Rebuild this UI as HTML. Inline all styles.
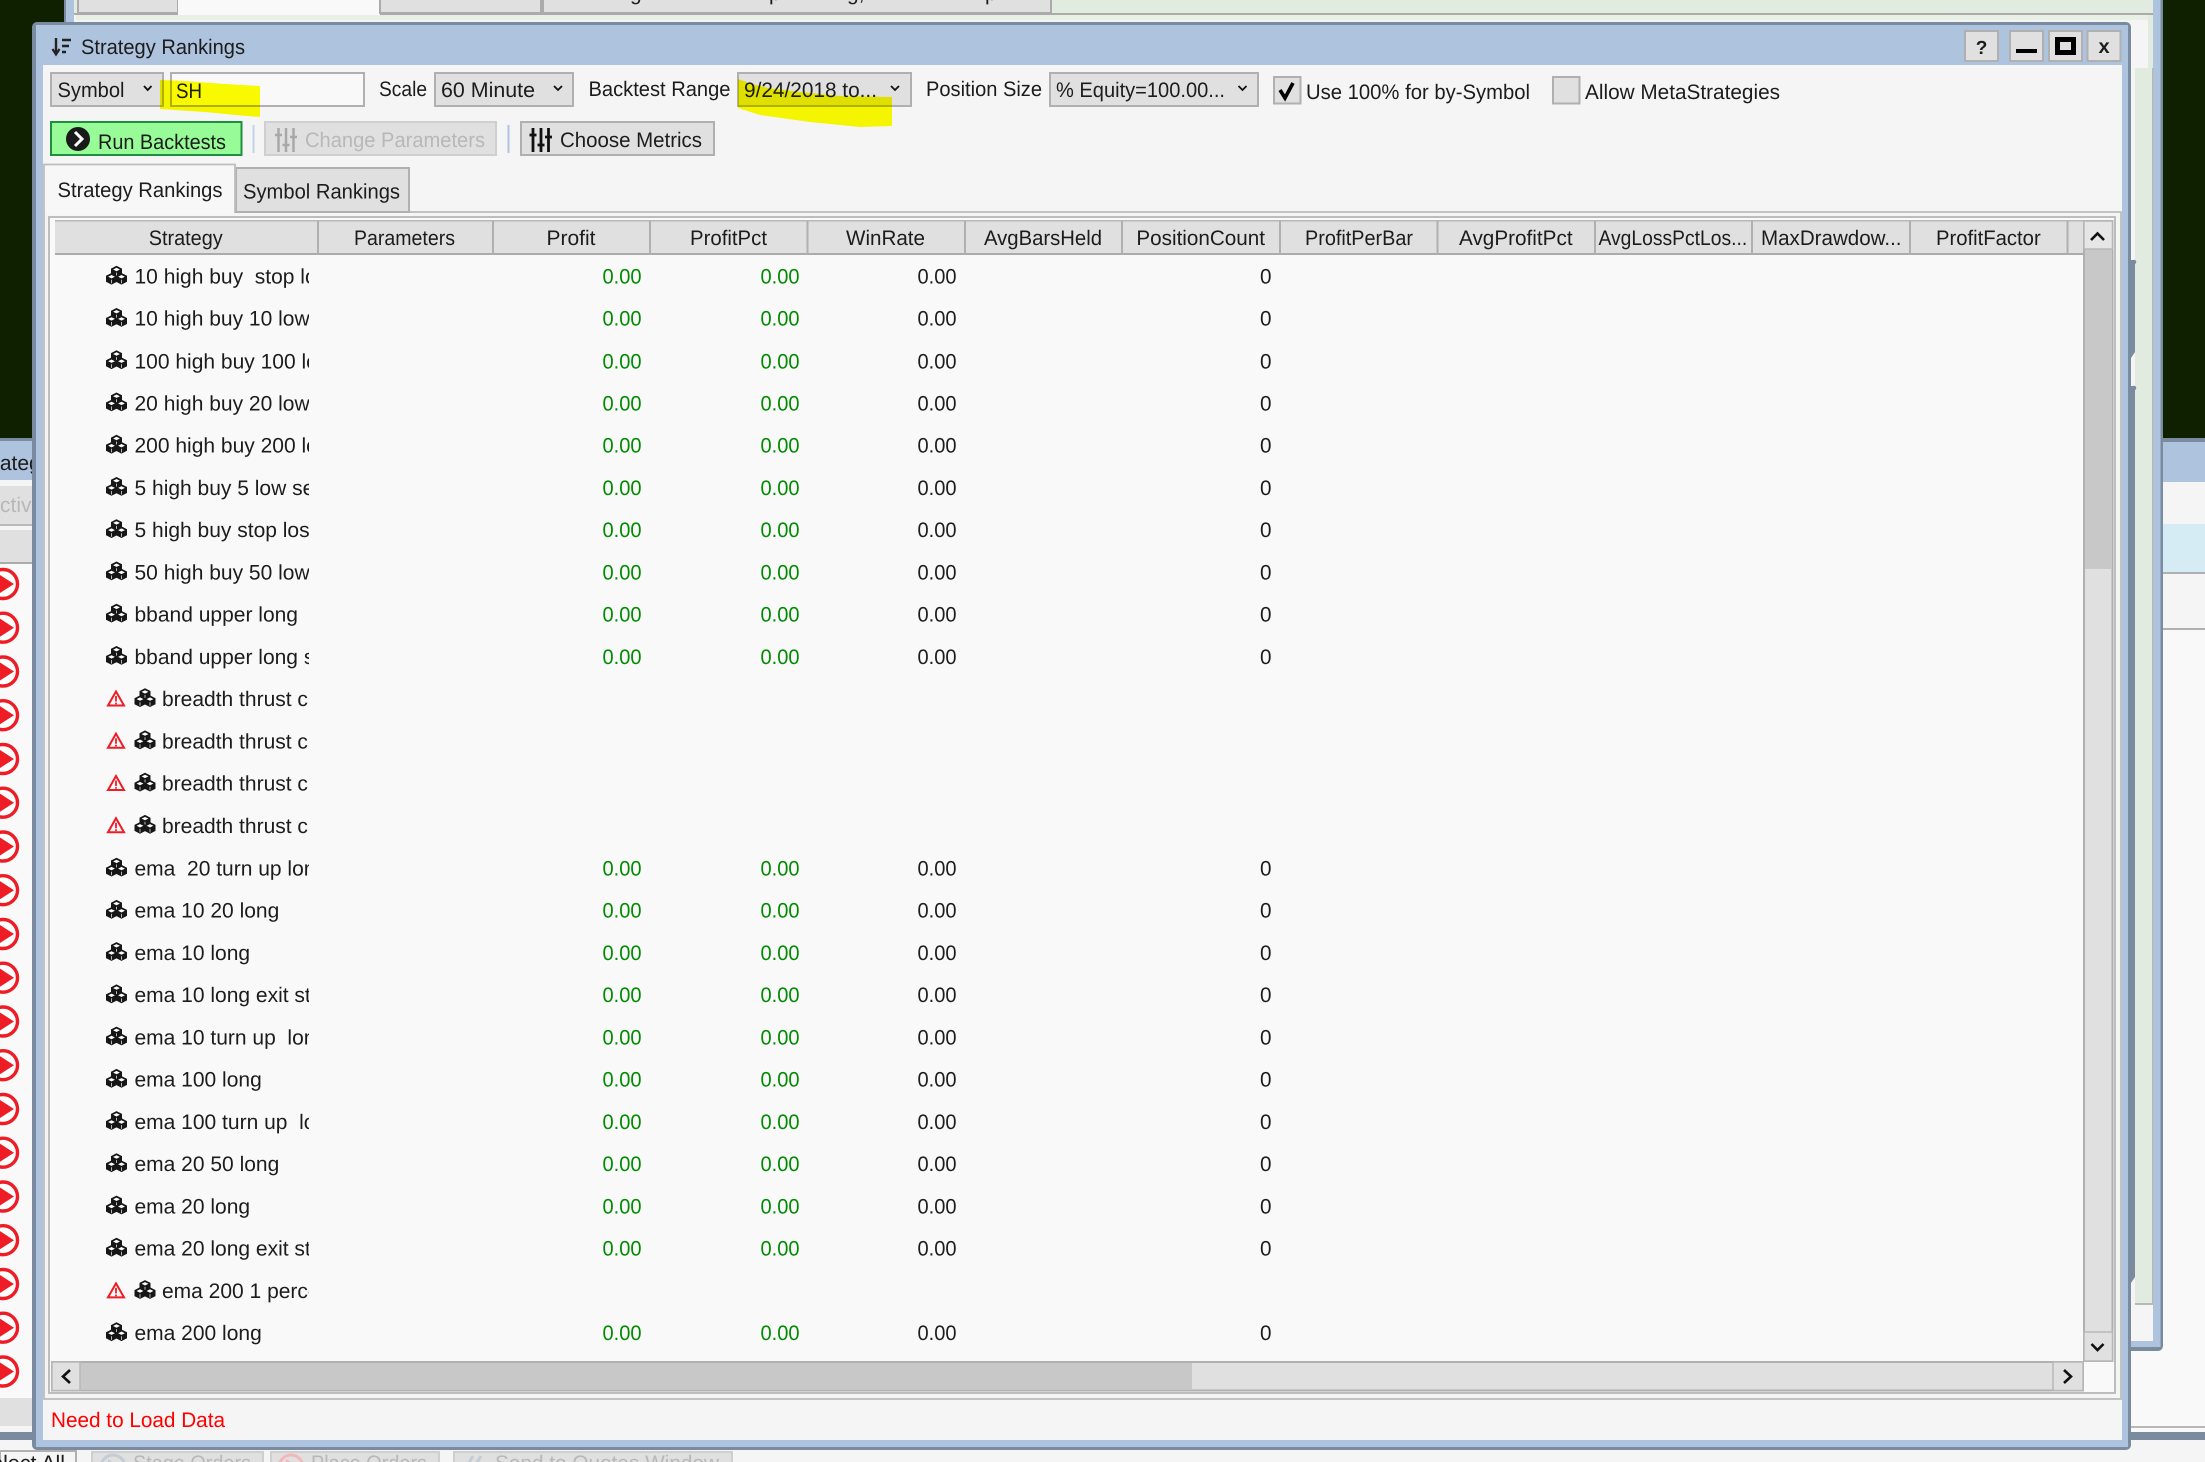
<!DOCTYPE html>
<html><head><meta charset="utf-8"><title>Strategy Rankings</title>
<style>
html,body{margin:0;padding:0;width:2205px;height:1462px;overflow:hidden;background:#f5f5f5}
svg{display:block}
text{font-family:"Liberation Sans",sans-serif;font-size:21px;fill:#1c1c1c;white-space:pre;text-rendering:geometricPrecision}
.g{fill:#008a00}
.d{fill:#b8b8b8}
.b{fill:#e0e0e0;stroke:#b0b0b0;stroke-width:2}
.h{stroke:#b0b0b0;stroke-width:2}
.s{fill:none;stroke:#111;stroke-width:2.6}
</style></head><body>
<svg width="2205" height="1462" viewBox="0 0 2205 1462" xmlns="http://www.w3.org/2000/svg">
<defs>
<g id="cube"><path d="M0 -5.800L5.500 -3V3L0 5.800L-5.500 3V-3Z" fill="#161616"/><path d="M0 -3.800L3.400 -2.100L0 -.4L-3.400 -2.100Z" fill="#fff"/><path d="M0 1V4.600" stroke="#fff" stroke-width=".7"/></g>
<g id="c"><use href="#cube" x="11.500" y="5.600"/><use href="#cube" x="6.500" y="12.800"/><use href="#cube" x="16.500" y="12.800"/></g>
<g id="w"><path d="M9 1.500L17 15.500H1Z" fill="none" stroke="#ee1c25" stroke-width="2"/><path d="M9 6V11.500M9 12.600V14.300" stroke="#ee1c25" stroke-width="1.800"/></g>
<g id="r"><circle cx="3" cy="0" r="14.500" fill="#fff" stroke="#ee1c25" stroke-width="3.400"/><path d="M-3 -11L14 0L-3 11Z" fill="#ee1c25"/></g>
<clipPath id="nc"><rect x="50" y="255" width="259" height="1106"/></clipPath>
<clipPath id="lc"><rect x="0" y="0" width="32" height="1462"/></clipPath>
</defs>

<rect width="2205" height="1462" fill="#f5f5f5"/>
<!-- dark desktop -->
<rect x="0" y="0" width="66" height="438" fill="#0f2000"/>
<rect x="2160" y="0" width="45" height="438" fill="#0f2000"/>

<!-- back right window -->
<rect x="2131" y="438" width="74" height="994" fill="#f9f9f9"/>
<rect x="2163" y="438" width="42" height="4" fill="#7a8b9f"/>
<rect x="2163" y="442" width="42" height="40" fill="#aec3de"/>
<rect x="2163" y="482" width="42" height="42" fill="#f5f5f5"/>
<rect x="2163" y="524" width="42" height="48" fill="#d6ecf4"/>
<rect x="2163" y="572" width="42" height="2" fill="#b0b0b0"/>
<rect x="2163" y="574" width="42" height="54" fill="#f5f5f5"/>
<rect x="2163" y="628" width="42" height="2" fill="#b0b0b0"/>
<rect x="2131" y="1426" width="74" height="2" fill="#b8b8b8"/>
<rect x="2131" y="1432" width="74" height="8" fill="#7a8b9f"/>

<!-- behind window -->
<path d="M64 0H2163V1346a5 5 0 0 1-5 5H64Z" fill="#7a8b9f"/>
<path d="M66 0H2160.500V1347H66Z" fill="#aec3de"/>
<rect x="74" y="0" width="2079" height="1341" fill="#f5f5f5"/>
<rect x="74" y="0" width="2079" height="14" fill="#e2ebe0"/>
<rect x="74" y="13" width="2079" height="2" fill="#ababab"/>
<rect x="76" y="15" width="2072" height="5" fill="#e8f0e6"/>
<rect x="2135" y="68" width="18" height="1235" fill="#e2ebe0"/>
<rect x="2148" y="15" width="5" height="54" fill="#e2ebe0"/>
<rect x="2135" y="1303" width="18" height="2" fill="#b8b8b8"/>
<rect x="2152" y="68" width="1.500" height="1235" fill="#b8b8b8"/>
<rect x="78" y="-2" width="100" height="15" fill="#e0e0e0" stroke="#ababab" stroke-width="2"/>
<rect x="178" y="0" width="202" height="15" fill="#f9f9f9"/>
<rect x="380" y="-2" width="161" height="15" fill="#e0e0e0" stroke="#ababab" stroke-width="2"/>
<rect x="543" y="-2" width="508" height="15" fill="#e0e0e0" stroke="#ababab" stroke-width="2"/>
<text x="630" y="0">g</text><text x="769" y="0">p</text><text x="847" y="0">g,</text><text x="985" y="0">p</text>
<path d="M2131 260h2a2 2 0 0 1 2 4V352l-4 6ZM2131 386h2a2 2 0 0 1 2 4V1277l-4 6Z" fill="#7a8b9f"/>

<!-- left back window -->
<rect x="0" y="438" width="35" height="4" fill="#7a8b9f"/>
<rect x="0" y="441" width="35" height="39" fill="#aec3de"/>
<rect x="0" y="480" width="35" height="960" fill="#f9f9f9"/>
<rect x="0" y="480" width="35" height="6" fill="#f5f5f5"/>
<rect x="0" y="486" width="35" height="38" fill="#e0e0e0"/>
<rect x="0" y="524" width="35" height="2" fill="#b8b8b8"/>
<rect x="0" y="526" width="35" height="4" fill="#f5f5f5"/>
<rect x="0" y="530" width="35" height="32" fill="#e0e0e0"/>
<rect x="0" y="562" width="35" height="2" fill="#ababab"/>
<rect x="0" y="1398" width="35" height="28" fill="#e0e0e0"/>
<rect x="0" y="1426" width="35" height="6" fill="#f5f5f5"/>
<rect x="0" y="1432" width="35" height="8" fill="#7a8b9f"/>
<rect x="0" y="1440" width="35" height="22" fill="#f5f5f5"/>
<g clip-path="url(#lc)">
<text x="-27" y="470">Strategy</text>
<text x="-14" y="512" class="d">Activate</text>
<use href="#r" y="584"/><use href="#r" y="627.700"/><use href="#r" y="671.500"/><use href="#r" y="715.200"/><use href="#r" y="759"/><use href="#r" y="802.700"/><use href="#r" y="846.500"/><use href="#r" y="890.200"/><use href="#r" y="934"/><use href="#r" y="977.700"/><use href="#r" y="1021.500"/><use href="#r" y="1065.200"/><use href="#r" y="1109"/><use href="#r" y="1152.700"/><use href="#r" y="1196.500"/><use href="#r" y="1240.200"/><use href="#r" y="1284"/><use href="#r" y="1327.700"/><use href="#r" y="1371.500"/>
</g>

<!-- bottom strip -->
<rect x="0" y="1451" width="76" height="12" fill="#f5f5f5" stroke="#b0b0b0" stroke-width="2"/>
<text x="-23" y="1470" textLength="88" lengthAdjust="spacingAndGlyphs">Select All</text>
<rect x="92" y="1452" width="171" height="12" fill="#e0e0e0" stroke="#cfcfcf" stroke-width="2"/>
<circle cx="113" cy="1467" r="12" fill="none" stroke="#c4ccd6" stroke-width="3"/><path d="M108 1459L120 1467L108 1475Z" fill="#c4ccd6"/>
<text x="133" y="1470" class="d" textLength="118" lengthAdjust="spacingAndGlyphs">Stage Orders</text>
<rect x="271" y="1452" width="168" height="12" fill="#e0e0e0" stroke="#cfcfcf" stroke-width="2"/>
<circle cx="291" cy="1467" r="12" fill="none" stroke="#f4b8ba" stroke-width="3"/><path d="M286 1459L298 1467L286 1475Z" fill="#f4b8ba"/>
<text x="311" y="1470" class="d" textLength="116" lengthAdjust="spacingAndGlyphs">Place Orders</text>
<rect x="454" y="1452" width="278" height="12" fill="#e0e0e0" stroke="#cfcfcf" stroke-width="2"/>
<path d="M473 1456L468 1464M481 1456L476 1464" stroke="#c4ccd6" stroke-width="3" fill="none"/>
<text x="495" y="1470" class="d" textLength="224" lengthAdjust="spacingAndGlyphs">Send to Quotes Window</text>

<!-- main window -->
<rect x="32" y="22" width="2099" height="1428" rx="5" fill="#7a8b9f"/>
<rect x="36" y="25" width="2092" height="1422" fill="#aec3de"/>
<rect x="43" y="65" width="2079" height="1375" fill="#f5f5f5"/>

<!-- title -->
<path d="M56 38V52" stroke="#222" stroke-width="2.400"/><path d="M52.500 49L56 54.500L59.500 49" fill="none" stroke="#222" stroke-width="2.200"/>
<path d="M62 40H71M62 46H69M62 52H66" stroke="#222" stroke-width="2.400"/>
<text x="81" y="54" textLength="164" lengthAdjust="spacingAndGlyphs">Strategy Rankings</text>
<rect x="1965" y="31" width="33" height="30" class="b"/>
<text x="1981.500" y="54" text-anchor="middle" style="font-weight:bold;font-size:19px">?</text>
<rect x="2010" y="31" width="33" height="30" class="b"/><rect x="2016" y="49" width="21" height="4" fill="#000"/>
<rect x="2049" y="31" width="33" height="30" class="b"/><rect x="2057.500" y="39.500" width="16" height="13" fill="none" stroke="#000" stroke-width="5"/>
<rect x="2087.500" y="31" width="33" height="30" class="b"/>
<text x="2104" y="53" text-anchor="middle" style="font-weight:bold;font-size:20px">x</text>

<!-- toolbar -->
<rect x="51" y="73" width="112" height="33" class="b"/>
<text x="57.500" y="97" textLength="67" lengthAdjust="spacingAndGlyphs">Symbol</text>
<path d="M144 86L147.700 90L151.500 86" class="s" style="stroke-width:1.800"/>
<rect x="171" y="73" width="193" height="33" fill="#f9f9f9" stroke="#b0b0b0" stroke-width="2"/>
<text x="176" y="98" textLength="26" lengthAdjust="spacingAndGlyphs">SH</text>
<text x="379" y="96" textLength="48" lengthAdjust="spacingAndGlyphs">Scale</text>
<rect x="435" y="73" width="138" height="33" class="b"/>
<text x="441" y="97" textLength="94" lengthAdjust="spacingAndGlyphs">60 Minute</text>
<path d="M554 86L558 90L562 86" class="s" style="stroke-width:1.800"/>
<text x="588.500" y="96" textLength="142" lengthAdjust="spacingAndGlyphs">Backtest Range</text>
<rect x="738" y="73" width="173" height="33" class="b"/>
<text x="744" y="97" textLength="133" lengthAdjust="spacingAndGlyphs">9/24/2018 to...</text>
<path d="M891 86L895 90L899 86" class="s" style="stroke-width:1.800"/>
<text x="926" y="96" textLength="116" lengthAdjust="spacingAndGlyphs">Position Size</text>
<rect x="1050" y="73" width="208" height="33" class="b"/>
<text x="1056" y="97" textLength="169" lengthAdjust="spacingAndGlyphs">% Equity=100.00...</text>
<path d="M1238.500 86L1242.500 90L1246.500 86" class="s" style="stroke-width:1.800"/>
<rect x="1274" y="77" width="26.500" height="26.500" class="b"/>
<path d="M1280 90L1285 98L1293 83" fill="none" stroke="#000" stroke-width="3.600"/>
<text x="1306" y="99" textLength="224" lengthAdjust="spacingAndGlyphs">Use 100% for by-Symbol</text>
<rect x="1553" y="77" width="26.500" height="26.500" class="b"/>
<text x="1585" y="99" textLength="195" lengthAdjust="spacingAndGlyphs">Allow MetaStrategies</text>

<!-- buttons -->
<rect x="51" y="122" width="190.500" height="33" fill="#97fb97" stroke="#1f8f3f" stroke-width="2"/>
<circle cx="78" cy="139" r="12" fill="#1a1a1a"/><path d="M75 132L82 139L75 146" fill="none" stroke="#fff" stroke-width="3"/>
<text x="98" y="149" textLength="128" lengthAdjust="spacingAndGlyphs">Run Backtests</text>
<rect x="252.500" y="125" width="2" height="28" fill="#c3d3e7"/>
<rect x="265" y="122" width="231" height="33" fill="#e0e0e0" stroke="#cfcfcf" stroke-width="2"/>
<path d="M278.500 128V152M286 128V152M293.500 128V152M275 135H282M282.500 145H289.500M290 137H297" stroke="#a8a8a8" stroke-width="2.500" fill="none"/>
<text x="305" y="147" class="d" textLength="180" lengthAdjust="spacingAndGlyphs">Change Parameters</text>
<rect x="507.500" y="125" width="2" height="28" fill="#aec3de"/>
<rect x="521" y="122" width="193" height="33" class="b"/>
<path d="M533 128V152M541 128V152M548.500 128V152M529.500 135H536.500M537.500 145H544.500M545 137H552" stroke="#111" stroke-width="2.800" fill="none"/>
<text x="560" y="147" textLength="142" lengthAdjust="spacingAndGlyphs">Choose Metrics</text>

<!-- tabs / panel -->
<rect x="44" y="212" width="2077" height="1187" fill="#f5f5f5" stroke="#bdbdbd" stroke-width="1.800"/>
<rect x="236" y="168" width="173" height="44" class="b"/>
<path d="M44 212V164.500H235V212" fill="#f7f7f7" stroke="#bdbdbd" stroke-width="1.800"/>
<rect x="45" y="205" width="189" height="9" fill="#f7f7f7"/>
<text x="57.500" y="197" textLength="165" lengthAdjust="spacingAndGlyphs">Strategy Rankings</text>
<text x="243" y="198.500" textLength="157" lengthAdjust="spacingAndGlyphs">Symbol Rankings</text>

<!-- grid -->
<rect x="49" y="217" width="2066" height="1176" fill="#f9f9f9" stroke="#bdbdbd" stroke-width="2"/>
<rect x="55" y="221" width="2028" height="33" fill="#e0e0e0"/>
<rect x="55" y="220" width="2028" height="1.500" fill="#b8b8b8"/>
<rect x="55" y="253" width="2028" height="2" fill="#ababab"/>
<path d="M318 221V254M493 221V254M650 221V254M807.500 221V254M965 221V254M1122 221V254M1280 221V254M1437.500 221V254M1595 221V254M1752 221V254M1910 221V254M2067.500 221V254" class="h"/>
<g>
<text x="148.700" y="245" textLength="74" lengthAdjust="spacingAndGlyphs">Strategy</text>
<text x="354" y="245" textLength="101" lengthAdjust="spacingAndGlyphs">Parameters</text>
<text x="546.500" y="245" textLength="49" lengthAdjust="spacingAndGlyphs">Profit</text>
<text x="690" y="245" textLength="77" lengthAdjust="spacingAndGlyphs">ProfitPct</text>
<text x="846" y="245" textLength="79" lengthAdjust="spacingAndGlyphs">WinRate</text>
<text x="984" y="245" textLength="118" lengthAdjust="spacingAndGlyphs">AvgBarsHeld</text>
<text x="1136.400" y="245" textLength="128.600" lengthAdjust="spacingAndGlyphs">PositionCount</text>
<text x="1305" y="245" textLength="108" lengthAdjust="spacingAndGlyphs">ProfitPerBar</text>
<text x="1459" y="245" textLength="113.600" lengthAdjust="spacingAndGlyphs">AvgProfitPct</text>
<text x="1598.500" y="245" textLength="148.700" lengthAdjust="spacingAndGlyphs">AvgLossPctLos...</text>
<text x="1761" y="245" textLength="140.500" lengthAdjust="spacingAndGlyphs">MaxDrawdow...</text>
<text x="1936" y="245" textLength="104.700" lengthAdjust="spacingAndGlyphs">ProfitFactor</text>
</g>

<!-- vertical scrollbar -->
<rect x="2084" y="221" width="28.500" height="1140" fill="#e0e0e0" stroke="#b0b0b0" stroke-width="2"/>
<rect x="2085" y="249" width="27" height="320" fill="#c8c8c8"/>
<rect x="2084" y="221" width="28.500" height="28" fill="#e6e6e6" stroke="#b8b8b8" stroke-width="1.500"/>
<path d="M2091 240L2097.500 233.500L2104 240" class="s"/>
<rect x="2084" y="1332" width="28.500" height="29" fill="#e0e0e0" stroke="#b8b8b8" stroke-width="1.500"/>
<path d="M2091.500 1344L2097.500 1350L2103.500 1344" class="s"/>
<!-- horizontal scrollbar -->
<rect x="52" y="1362" width="2031" height="28.500" fill="#e0e0e0" stroke="#b0b0b0" stroke-width="2"/>
<rect x="80" y="1363" width="1112" height="27" fill="#c8c8c8"/>
<rect x="52" y="1362" width="28" height="28.500" fill="#e0e0e0" stroke="#b8b8b8" stroke-width="1.500"/>
<path d="M70 1370L63 1376.500L70 1383" class="s"/>
<rect x="2053" y="1362" width="30" height="28.500" fill="#e0e0e0" stroke="#b8b8b8" stroke-width="1.500"/>
<path d="M2064 1370L2071 1376.500L2064 1383" class="s"/>

<!-- row names -->
<g clip-path="url(#nc)">
<text x="134.500" y="283.500">10 high buy  stop loss</text>
<text x="134.500" y="325.700">10 high buy 10 low sell</text>
<text x="134.500" y="368.300">100 high buy 100 low sell</text>
<text x="134.500" y="410.500">20 high buy 20 low sell</text>
<text x="134.500" y="452.700">200 high buy 200 low sell</text>
<text x="134.500" y="494.900">5 high buy 5 low sell</text>
<text x="134.500" y="537.200">5 high buy stop loss</text>
<text x="134.500" y="579.400">50 high buy 50 low sell</text>
<text x="134.500" y="621.600">bband upper long</text>
<text x="134.500" y="663.900">bband upper long stop</text>
<text x="162" y="706.100">breadth thrust cross</text>
<text x="162" y="748.300">breadth thrust cross</text>
<text x="162" y="790.600">breadth thrust cross</text>
<text x="162" y="832.800">breadth thrust cross</text>
<text x="134.500" y="875.400">ema  20 turn up long</text>
<text x="134.500" y="917.600">ema 10 20 long</text>
<text x="134.500" y="959.800">ema 10 long</text>
<text x="134.500" y="1002.100">ema 10 long exit stop</text>
<text x="134.500" y="1044.300">ema 10 turn up  long</text>
<text x="134.500" y="1086.600">ema 100 long</text>
<text x="134.500" y="1128.800">ema 100 turn up  long</text>
<text x="134.500" y="1171">ema 20 50 long</text>
<text x="134.500" y="1213.300">ema 20 long</text>
<text x="134.500" y="1255.500">ema 20 long exit stop</text>
<text x="162" y="1297.800">ema 200 1 percent</text>
<text x="134.500" y="1340">ema 200 long</text>
</g>

<!-- row icons -->
<use href="#c" x="105" y="266"/><use href="#c" x="105" y="308.200"/><use href="#c" x="105" y="350.500"/><use href="#c" x="105" y="392.700"/><use href="#c" x="105" y="435"/><use href="#c" x="105" y="477.200"/><use href="#c" x="105" y="519.400"/><use href="#c" x="105" y="561.700"/><use href="#c" x="105" y="603.900"/><use href="#c" x="105" y="646.200"/>
<use href="#c" x="133.500" y="688.400"/><use href="#c" x="133.500" y="730.600"/><use href="#c" x="133.500" y="772.900"/><use href="#c" x="133.500" y="815.100"/>
<use href="#w" x="107" y="690"/><use href="#w" x="107" y="732.200"/><use href="#w" x="107" y="774.500"/><use href="#w" x="107" y="816.700"/>
<g transform="translate(0,.5)">
<use href="#c" x="105" y="857.400"/><use href="#c" x="105" y="899.600"/><use href="#c" x="105" y="941.800"/><use href="#c" x="105" y="984.100"/><use href="#c" x="105" y="1026.300"/><use href="#c" x="105" y="1068.600"/><use href="#c" x="105" y="1110.800"/><use href="#c" x="105" y="1153"/><use href="#c" x="105" y="1195.300"/><use href="#c" x="105" y="1237.500"/>
<use href="#c" x="133.500" y="1279.800"/><use href="#w" x="107" y="1281.400"/>
<use href="#c" x="105" y="1322"/>
</g>

<!-- row values -->
<g><text class="g" x="602.500" y="283.500" textLength="39" lengthAdjust="spacingAndGlyphs">0.00</text><text class="g" x="760.500" y="283.500" textLength="39" lengthAdjust="spacingAndGlyphs">0.00</text><text x="917.500" y="283.500" textLength="39" lengthAdjust="spacingAndGlyphs">0.00</text><text x="1260" y="283.500" textLength="11.500" lengthAdjust="spacingAndGlyphs">0</text></g>
<g><text class="g" x="602.500" y="325.700" textLength="39" lengthAdjust="spacingAndGlyphs">0.00</text><text class="g" x="760.500" y="325.700" textLength="39" lengthAdjust="spacingAndGlyphs">0.00</text><text x="917.500" y="325.700" textLength="39" lengthAdjust="spacingAndGlyphs">0.00</text><text x="1260" y="325.700" textLength="11.500" lengthAdjust="spacingAndGlyphs">0</text></g>
<g><text class="g" x="602.500" y="368.300" textLength="39" lengthAdjust="spacingAndGlyphs">0.00</text><text class="g" x="760.500" y="368.300" textLength="39" lengthAdjust="spacingAndGlyphs">0.00</text><text x="917.500" y="368.300" textLength="39" lengthAdjust="spacingAndGlyphs">0.00</text><text x="1260" y="368.300" textLength="11.500" lengthAdjust="spacingAndGlyphs">0</text></g>
<g><text class="g" x="602.500" y="410.500" textLength="39" lengthAdjust="spacingAndGlyphs">0.00</text><text class="g" x="760.500" y="410.500" textLength="39" lengthAdjust="spacingAndGlyphs">0.00</text><text x="917.500" y="410.500" textLength="39" lengthAdjust="spacingAndGlyphs">0.00</text><text x="1260" y="410.500" textLength="11.500" lengthAdjust="spacingAndGlyphs">0</text></g>
<g><text class="g" x="602.500" y="452.700" textLength="39" lengthAdjust="spacingAndGlyphs">0.00</text><text class="g" x="760.500" y="452.700" textLength="39" lengthAdjust="spacingAndGlyphs">0.00</text><text x="917.500" y="452.700" textLength="39" lengthAdjust="spacingAndGlyphs">0.00</text><text x="1260" y="452.700" textLength="11.500" lengthAdjust="spacingAndGlyphs">0</text></g>
<g><text class="g" x="602.500" y="494.900" textLength="39" lengthAdjust="spacingAndGlyphs">0.00</text><text class="g" x="760.500" y="494.900" textLength="39" lengthAdjust="spacingAndGlyphs">0.00</text><text x="917.500" y="494.900" textLength="39" lengthAdjust="spacingAndGlyphs">0.00</text><text x="1260" y="494.900" textLength="11.500" lengthAdjust="spacingAndGlyphs">0</text></g>
<g><text class="g" x="602.500" y="537.200" textLength="39" lengthAdjust="spacingAndGlyphs">0.00</text><text class="g" x="760.500" y="537.200" textLength="39" lengthAdjust="spacingAndGlyphs">0.00</text><text x="917.500" y="537.200" textLength="39" lengthAdjust="spacingAndGlyphs">0.00</text><text x="1260" y="537.200" textLength="11.500" lengthAdjust="spacingAndGlyphs">0</text></g>
<g><text class="g" x="602.500" y="579.400" textLength="39" lengthAdjust="spacingAndGlyphs">0.00</text><text class="g" x="760.500" y="579.400" textLength="39" lengthAdjust="spacingAndGlyphs">0.00</text><text x="917.500" y="579.400" textLength="39" lengthAdjust="spacingAndGlyphs">0.00</text><text x="1260" y="579.400" textLength="11.500" lengthAdjust="spacingAndGlyphs">0</text></g>
<g><text class="g" x="602.500" y="621.600" textLength="39" lengthAdjust="spacingAndGlyphs">0.00</text><text class="g" x="760.500" y="621.600" textLength="39" lengthAdjust="spacingAndGlyphs">0.00</text><text x="917.500" y="621.600" textLength="39" lengthAdjust="spacingAndGlyphs">0.00</text><text x="1260" y="621.600" textLength="11.500" lengthAdjust="spacingAndGlyphs">0</text></g>
<g><text class="g" x="602.500" y="663.900" textLength="39" lengthAdjust="spacingAndGlyphs">0.00</text><text class="g" x="760.500" y="663.900" textLength="39" lengthAdjust="spacingAndGlyphs">0.00</text><text x="917.500" y="663.900" textLength="39" lengthAdjust="spacingAndGlyphs">0.00</text><text x="1260" y="663.900" textLength="11.500" lengthAdjust="spacingAndGlyphs">0</text></g>
<g><text class="g" x="602.500" y="875.400" textLength="39" lengthAdjust="spacingAndGlyphs">0.00</text><text class="g" x="760.500" y="875.400" textLength="39" lengthAdjust="spacingAndGlyphs">0.00</text><text x="917.500" y="875.400" textLength="39" lengthAdjust="spacingAndGlyphs">0.00</text><text x="1260" y="875.400" textLength="11.500" lengthAdjust="spacingAndGlyphs">0</text></g>
<g><text class="g" x="602.500" y="917.600" textLength="39" lengthAdjust="spacingAndGlyphs">0.00</text><text class="g" x="760.500" y="917.600" textLength="39" lengthAdjust="spacingAndGlyphs">0.00</text><text x="917.500" y="917.600" textLength="39" lengthAdjust="spacingAndGlyphs">0.00</text><text x="1260" y="917.600" textLength="11.500" lengthAdjust="spacingAndGlyphs">0</text></g>
<g><text class="g" x="602.500" y="959.800" textLength="39" lengthAdjust="spacingAndGlyphs">0.00</text><text class="g" x="760.500" y="959.800" textLength="39" lengthAdjust="spacingAndGlyphs">0.00</text><text x="917.500" y="959.800" textLength="39" lengthAdjust="spacingAndGlyphs">0.00</text><text x="1260" y="959.800" textLength="11.500" lengthAdjust="spacingAndGlyphs">0</text></g>
<g><text class="g" x="602.500" y="1002.100" textLength="39" lengthAdjust="spacingAndGlyphs">0.00</text><text class="g" x="760.500" y="1002.100" textLength="39" lengthAdjust="spacingAndGlyphs">0.00</text><text x="917.500" y="1002.100" textLength="39" lengthAdjust="spacingAndGlyphs">0.00</text><text x="1260" y="1002.100" textLength="11.500" lengthAdjust="spacingAndGlyphs">0</text></g>
<g><text class="g" x="602.500" y="1044.300" textLength="39" lengthAdjust="spacingAndGlyphs">0.00</text><text class="g" x="760.500" y="1044.300" textLength="39" lengthAdjust="spacingAndGlyphs">0.00</text><text x="917.500" y="1044.300" textLength="39" lengthAdjust="spacingAndGlyphs">0.00</text><text x="1260" y="1044.300" textLength="11.500" lengthAdjust="spacingAndGlyphs">0</text></g>
<g><text class="g" x="602.500" y="1086.600" textLength="39" lengthAdjust="spacingAndGlyphs">0.00</text><text class="g" x="760.500" y="1086.600" textLength="39" lengthAdjust="spacingAndGlyphs">0.00</text><text x="917.500" y="1086.600" textLength="39" lengthAdjust="spacingAndGlyphs">0.00</text><text x="1260" y="1086.600" textLength="11.500" lengthAdjust="spacingAndGlyphs">0</text></g>
<g><text class="g" x="602.500" y="1128.800" textLength="39" lengthAdjust="spacingAndGlyphs">0.00</text><text class="g" x="760.500" y="1128.800" textLength="39" lengthAdjust="spacingAndGlyphs">0.00</text><text x="917.500" y="1128.800" textLength="39" lengthAdjust="spacingAndGlyphs">0.00</text><text x="1260" y="1128.800" textLength="11.500" lengthAdjust="spacingAndGlyphs">0</text></g>
<g><text class="g" x="602.500" y="1171" textLength="39" lengthAdjust="spacingAndGlyphs">0.00</text><text class="g" x="760.500" y="1171" textLength="39" lengthAdjust="spacingAndGlyphs">0.00</text><text x="917.500" y="1171" textLength="39" lengthAdjust="spacingAndGlyphs">0.00</text><text x="1260" y="1171" textLength="11.500" lengthAdjust="spacingAndGlyphs">0</text></g>
<g><text class="g" x="602.500" y="1213.300" textLength="39" lengthAdjust="spacingAndGlyphs">0.00</text><text class="g" x="760.500" y="1213.300" textLength="39" lengthAdjust="spacingAndGlyphs">0.00</text><text x="917.500" y="1213.300" textLength="39" lengthAdjust="spacingAndGlyphs">0.00</text><text x="1260" y="1213.300" textLength="11.500" lengthAdjust="spacingAndGlyphs">0</text></g>
<g><text class="g" x="602.500" y="1255.500" textLength="39" lengthAdjust="spacingAndGlyphs">0.00</text><text class="g" x="760.500" y="1255.500" textLength="39" lengthAdjust="spacingAndGlyphs">0.00</text><text x="917.500" y="1255.500" textLength="39" lengthAdjust="spacingAndGlyphs">0.00</text><text x="1260" y="1255.500" textLength="11.500" lengthAdjust="spacingAndGlyphs">0</text></g>
<g><text class="g" x="602.500" y="1340" textLength="39" lengthAdjust="spacingAndGlyphs">0.00</text><text class="g" x="760.500" y="1340" textLength="39" lengthAdjust="spacingAndGlyphs">0.00</text><text x="917.500" y="1340" textLength="39" lengthAdjust="spacingAndGlyphs">0.00</text><text x="1260" y="1340" textLength="11.500" lengthAdjust="spacingAndGlyphs">0</text></g>

<!-- status -->
<text x="51" y="1427" textLength="174" lengthAdjust="spacingAndGlyphs" style="fill:#f00">Need to Load Data</text>

<!-- yellow highlighter -->
<path d="M160 80L185 81L225 84L260 86V117L236 115L205 112L175 110L160 109Z" fill="#ffff00" style="mix-blend-mode:multiply"/>
<path d="M738 79L752 84L768 88L800 92L840 96L892 97V126L860 127L810 122L760 115L738 108Z" fill="#ffff00" style="mix-blend-mode:multiply"/>
</svg>
</body></html>
